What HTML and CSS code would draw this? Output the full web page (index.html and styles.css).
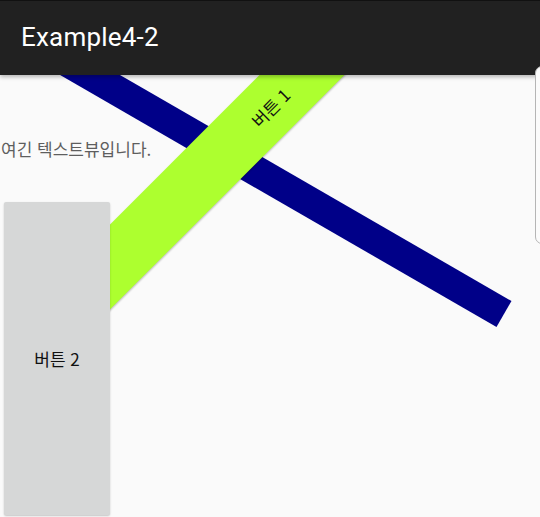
FILE: index.html
```html
<!DOCTYPE html>
<html lang="ko">
<head>
<meta charset="utf-8">
<title>Example4-2</title>
<link rel="stylesheet" href="styles.css">
</head>
<body>
  <header class="appbar">
    <h1 class="title">Example4-2</h1>
  </header>
  <main class="content">
    <p class="textview">여긴 텍스트뷰입니다.</p>
    <button class="btn btn-two" type="button">버튼 2</button>
  </main>
  <div class="bar-blue"></div>
  <button class="btn btn-one" type="button">버튼 1</button>
  <div class="edge-handle"></div>
</body>
</html>
```
FILE: styles.css
```css
html, body {
  margin: 0;
  padding: 0;
}
body {
  position: relative;
  width: 540px;
  height: 517px;
  overflow: hidden;
  background: #fafafa;
  font-family: "Noto Sans CJK KR", "Noto Sans", sans-serif;
}
.appbar {
  position: relative;
  z-index: 5;
  height: 75px;
  box-sizing: border-box;
  border-top: 1px solid #111;
  background: #212121;
  display: flex;
  align-items: center;
  padding-left: 21px;
  box-shadow: 0 2px 4px rgba(0, 0, 0, 0.28);
}
.title {
  margin: 0;
  font-family: Roboto, "Noto Sans", sans-serif;
  font-weight: 400;
  font-size: 26px;
  color: #ffffff;
  letter-spacing: 0.2px;
  padding-bottom: 2px;
}
.content {
  position: relative;
  z-index: 3;
  padding-top: 63px;
  display: flex;
  flex-direction: column;
  align-items: flex-start;
}
.textview {
  margin: 0;
  padding-left: 1px;
  font-size: 17px;
  line-height: 22px;
  color: #5e5e5e;
}
.btn {
  border: none;
  font-family: "Noto Sans CJK KR", "Noto Sans", sans-serif;
  font-size: 17px;
  color: #111;
  padding: 0;
}
.btn-two {
  margin-top: 42px;
  margin-left: 4px;
  width: 106px;
  height: 313px;
  background: #d6d7d7;
  border-radius: 2px;
  box-shadow: 0 1px 2px rgba(0, 0, 0, 0.22);
}
.bar-blue {
  position: absolute;
  z-index: 1;
  left: -96.5px;
  top: 298.5px;
  width: 600px;
  height: 30px;
  background: #000088;
  transform-origin: right center;
  transform: rotate(30deg);
}
.btn-one {
  position: absolute;
  z-index: 2;
  left: -30px;
  top: 77px;
  width: 600px;
  height: 60px;
  background: #adff2f;
  transform: rotate(-45deg);
  box-shadow: 0 1px 2px rgba(0, 0, 0, 0.25);
  display: flex;
  align-items: center;
  justify-content: center;
}
.edge-handle {
  position: absolute;
  z-index: 6;
  left: 535px;
  top: 66px;
  width: 14px;
  height: 178px;
  box-sizing: border-box;
  background: #fbfbfb;
  border: 1px solid #b5b5b5;
  border-radius: 7px;
}
```
